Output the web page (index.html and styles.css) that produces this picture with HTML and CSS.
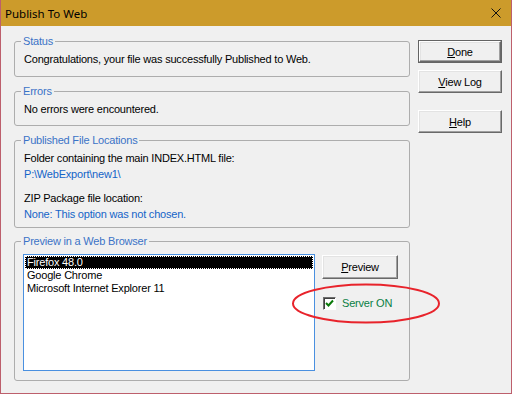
FILE: index.html
```html
<!DOCTYPE html>
<html lang="en">
<head>
  <meta charset="UTF-8">
  <title>Publish To Web</title>
  <link rel="stylesheet" href="styles.css">
</head>
<body>
  <div class="window">
    <div class="titlebar">
      <span class="title">Publish To Web</span>
      <svg class="close" width="10" height="10" viewBox="0 0 10 10"><path d="M0.5 0.5 L9.5 9.5 M9.5 0.5 L0.5 9.5" stroke="#111" stroke-width="1"/></svg>
    </div>
    <div class="content">
      <div class="groups">
        <div class="group status">
          <span class="legend">Status</span>
          <p>Congratulations, your file was successfully Published to Web.</p>
        </div>
        <div class="group errors">
          <span class="legend">Errors</span>
          <p>No errors were encountered.</p>
        </div>
        <div class="group locations">
          <span class="legend">Published File Locations</span>
          <p>Folder containing the main INDEX.HTML file:</p>
          <p class="path">P:\WebExport\new1\</p>
          <p class="gap">ZIP Package file location:</p>
          <p class="path">None: This option was not chosen.</p>
        </div>
        <div class="group preview">
          <span class="legend">Preview in a Web Browser</span>
          <ul class="listbox">
            <li class="selected">Firefox 48.0</li>
            <li>Google Chrome</li>
            <li>Microsoft Internet Explorer 11</li>
          </ul>
          <div class="preview-side">
            <button class="btn"><u>P</u>review</button>
            <label class="check">
              <span class="box"><svg width="9" height="9" viewBox="0 0 9 9"><path d="M1 4 L3.5 6.5 L8 1.5" stroke="#0a7a0a" stroke-width="2" fill="none"/></svg></span>
              Server ON
            </label>
          </div>
          <svg class="ring" width="154" height="44" viewBox="0 0 154 44"><ellipse cx="77" cy="21.5" rx="73" ry="19" fill="none" stroke="#e8232b" stroke-width="2"/></svg>
        </div>
      </div>
      <div class="actions">
        <button class="btn default"><u>D</u>one</button>
        <button class="btn log"><u>V</u>iew Log</button>
        <button class="btn help"><u>H</u>elp</button>
      </div>
    </div>
  </div>
</body>
</html>
```

FILE: styles.css
```css
:root {
  --face: #f0f0f0;
  --frame: #bd5f6c;
  --title: #cc9b2b;
  --line: #adadad;
  --label: #3b73c7;
  --link: #1464c8;
}
* { box-sizing: border-box; margin: 0; padding: 0; }
body {
  font-family: "Liberation Sans", Arial, sans-serif;
  font-size: 11px;
  letter-spacing: -0.2px;
  color: #000;
  background: var(--face);
}
.window {
  width: 512px;
  height: 394px;
  border: 1px solid var(--frame);
  border-top: none;
  background: var(--face);
}
.titlebar {
  height: 26px;
  background: var(--title);
  display: flex;
  align-items: center;
  justify-content: space-between;
  padding: 0 10px 0 4px;
}
.title {
  font-family: "Noto Sans", sans-serif;
  font-size: 11.5px;
  letter-spacing: 0;
  color: #000;
}
.content {
  display: flex;
  gap: 8px;
}
.groups {
  width: 409px;
  padding: 15px 0 0 13px;
  display: flex;
  flex-direction: column;
  gap: 13px;
}
.group {
  position: relative;
  border: 1px solid var(--line);
  border-radius: 3px;
  padding: 9px 9px 0;
  line-height: 16px;
}
.legend {
  position: absolute;
  top: -8px;
  left: 6px;
  padding: 0 2px;
  background: var(--face);
  color: var(--label);
  line-height: 14px;
}
.status { height: 36px; }
.errors { height: 35px; margin-top: 1px; }
.locations { height: 88px; margin-top: 1px; }
.path { color: var(--link); }
.gap { margin-top: 8px; }
.preview {
  height: 140px;
  padding: 12px 0 0 8px;
  display: flex;
  gap: 7px;
}
.listbox {
  list-style: none;
  width: 292px;
  height: 117px;
  border: 1px solid #4a90e0;
  background: #fff;
  padding: 1px;
  line-height: 13px;
}
.listbox li { padding-left: 2px; }
.listbox .selected {
  background: #000;
  color: #fff;
  outline: 1px dotted #fff;
  outline-offset: -1px;
}
.preview-side {
  display: flex;
  flex-direction: column;
  gap: 16px;
  padding-top: 1px;
}
.btn {
  font-family: "Liberation Sans", Arial, sans-serif;
  font-size: 11px;
  letter-spacing: -0.2px;
  color: #000;
  background: var(--face);
  border: 1px solid;
  border-color: #fff #696969 #696969 #fff;
  box-shadow: inset -1px -1px #a0a0a0, inset 1px 1px #e3e3e3;
  height: 23px;
  width: 84px;
}
.preview-side .btn { width: 76px; height: 24px; }
.btn.default {
  outline: 1px solid #646464;
  outline-offset: -1px;
  border-width: 2px;
  border-color: #fff #696969 #696969 #fff;
}
.check {
  display: flex;
  align-items: center;
  gap: 6px;
  color: #0a7f45;
  padding-left: 1px;
}
.box {
  width: 13px;
  height: 13px;
  border: 1px solid;
  border-color: #6d6d6d #fff #fff #6d6d6d;
  box-shadow: inset 1px 1px #404040;
  background: #fff;
  display: flex;
  align-items: center;
  justify-content: center;
}
.ring {
  position: absolute;
  left: 274px;
  top: 40px;
}
.actions {
  display: flex;
  flex-direction: column;
  padding-top: 14px;
}
.log { margin-top: 7px; }
.help { margin-top: 17px; }
```
